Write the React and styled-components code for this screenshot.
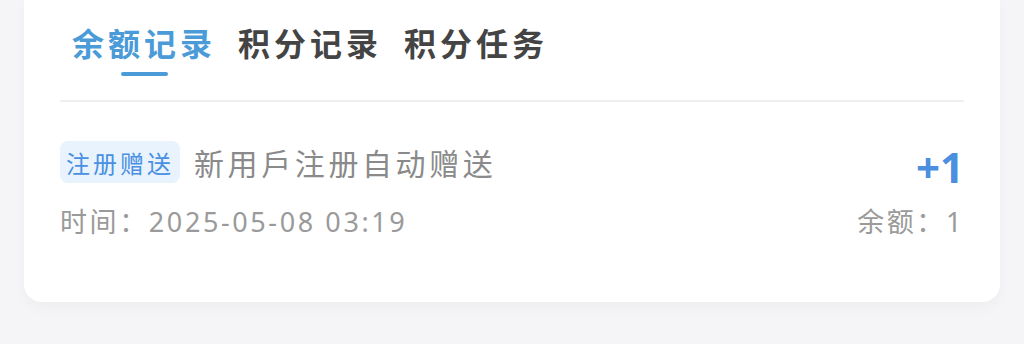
import React from 'react';
import styled, { createGlobalStyle } from 'styled-components';

const GlobalStyle = createGlobalStyle`
  html, body {
    margin: 0;
    padding: 0;
    background: #f5f5f7;
  }
  body {
    font-family: "Noto Sans", "Noto Sans CJK SC", sans-serif;
  }
`;

const Page = styled.div`
  width: 1024px;
  height: 344px;
  overflow: hidden;
  background: #f5f5f7;
`;

const Card = styled.div`
  margin: 0 24px;
  height: 302px;
  padding: 0 36px;
  box-sizing: border-box;
  background: #fff;
  border-radius: 0 0 18px 18px;
  box-shadow: 0 6px 14px rgba(0, 0, 0, 0.03);
`;

const Tabs = styled.div`
  display: flex;
  gap: 22px;
  padding: 22px 12px 0;
  height: 102px;
  box-sizing: border-box;
  border-bottom: 2px solid #efefef;
`;

const Tab = styled.div`
  position: relative;
  font-size: 32px;
  line-height: 44px;
  letter-spacing: 4px;
  font-weight: 700;
  color: ${(p) => (p.active ? '#4a9bd8' : '#444')};

  &::after {
    content: '';
    display: ${(p) => (p.active ? 'block' : 'none')};
    position: absolute;
    left: 50%;
    top: 50px;
    width: 47px;
    height: 4px;
    margin-left: -23px;
    border-radius: 2px;
    background: #4a9bd8;
  }
`;

const Record = styled.div`
  padding-top: 34px;
`;

const Row = styled.div`
  display: flex;
  align-items: center;
  justify-content: space-between;
`;

const Left = styled.div`
  display: flex;
  align-items: center;
  gap: 14px;
`;

const Tag = styled.span`
  height: 42px;
  padding: 0 6px;
  display: inline-flex;
  align-items: center;
  border-radius: 8px;
  background: #e9f3fd;
  color: #4a90e2;
  font-size: 24px;
  letter-spacing: 3px;
`;

const Title = styled.span`
  font-size: 30px;
  letter-spacing: 3.6px;
  color: #8a8a8a;
`;

const Amount = styled.span`
  font-size: 42px;
  line-height: 42px;
  font-weight: 700;
  color: #4a8fe0;
  margin-top: 10px;
`;

const Meta = styled.div`
  margin-top: 13px;
  font-size: 27px;
  letter-spacing: 2.6px;
  color: #9a9a9a;
  display: flex;
  justify-content: space-between;
`;

export default function App() {
  return (
    <Page>
      <GlobalStyle />
      <Card>
        <Tabs>
          <Tab active>余额记录</Tab>
          <Tab>积分记录</Tab>
          <Tab>积分任务</Tab>
        </Tabs>
        <Record>
          <Row>
            <Left>
              <Tag>注册赠送</Tag>
              <Title>新用戶注册自动赠送</Title>
            </Left>
            <Amount>+1</Amount>
          </Row>
          <Meta>
            <span>时间：2025-05-08 03:19</span>
            <span>余额：1</span>
          </Meta>
        </Record>
      </Card>
    </Page>
  );
}
